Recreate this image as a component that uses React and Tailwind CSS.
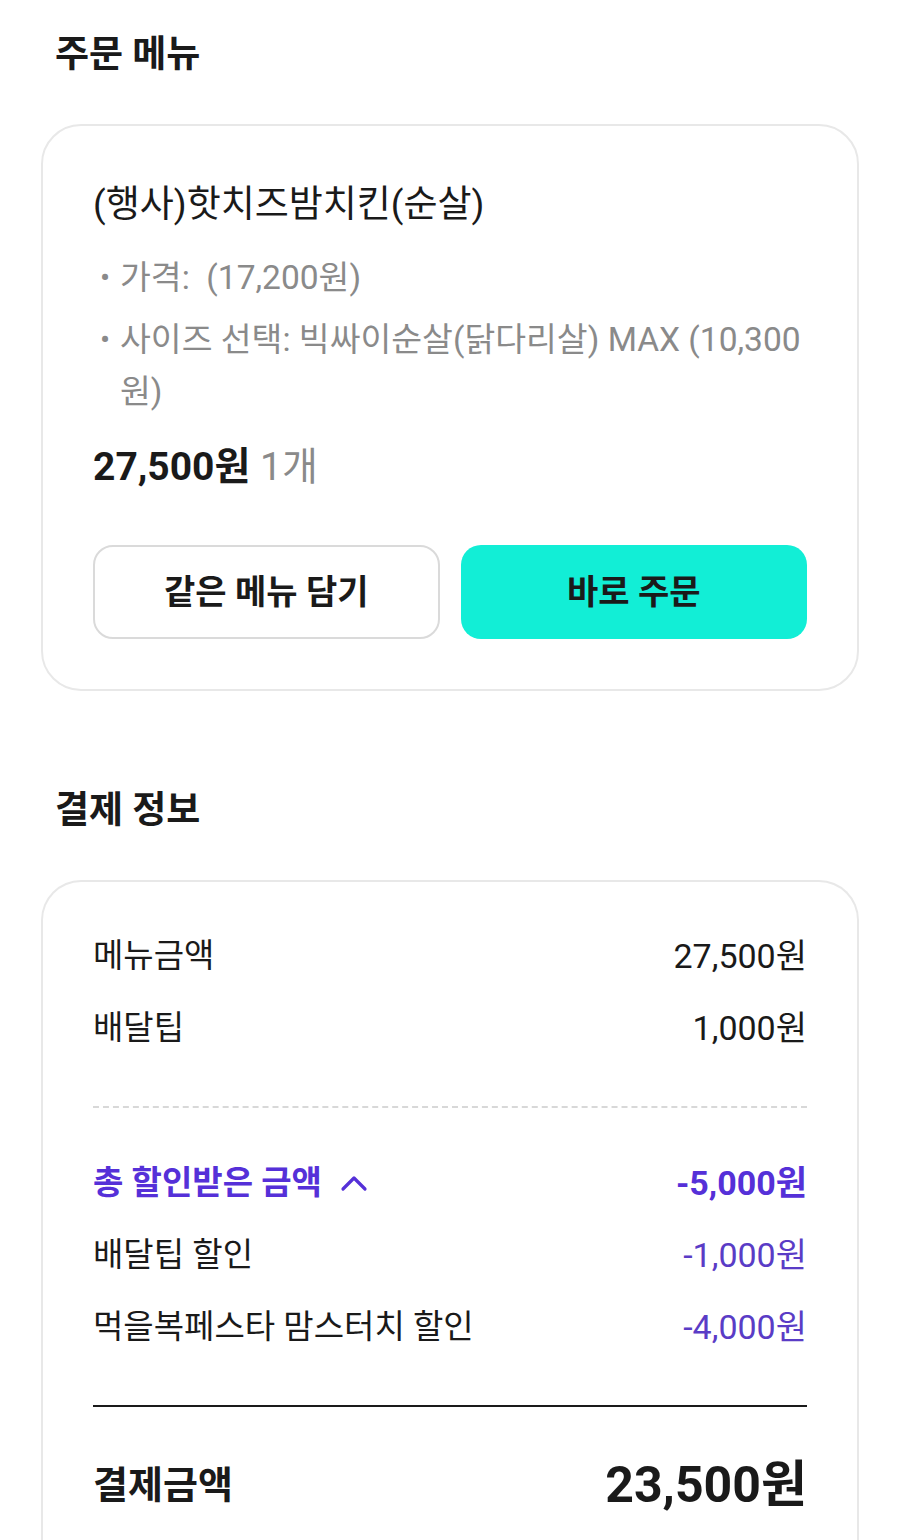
export default function App() {
  const font = { fontFamily: '"Roboto", "Noto Sans CJK KR", sans-serif' };
  return (
    <div className="w-[900px] min-h-[1540px] bg-white text-[#1a1a1a] pt-[33px] px-[41px] overflow-hidden" style={font}>
      <h2 className="pl-[14px] text-[37px] leading-[44px] font-bold">주문 메뉴</h2>
      <div className="mt-[47px] border-2 border-[#e8e8e8] rounded-[40px] px-[50px] pt-[55px] pb-[50px]">
        <div className="text-[37px] leading-[48px]">(행사)핫치즈밤치킨(순살)</div>
        <ul className="mt-[23px] text-[33.5px] leading-[52px] text-[#8a8a8a]">
          <li className="flex">
            <span className="w-[27px] shrink-0 pl-[7px] text-[30px]">•</span>
            <span>가격:&nbsp; (17,200원)</span>
          </li>
          <li className="flex mt-[10px]">
            <span className="w-[27px] shrink-0 pl-[7px] text-[30px]">•</span>
            <span className="whitespace-nowrap">사이즈 선택: 빅싸이순살(닭다리살) MAX (10,300<br />원)</span>
          </li>
        </ul>
        <div className="mt-[25px] text-[39px] leading-[48px]">
          <span className="font-bold">27,500원</span>{" "}
          <span className="text-[#8a8a8a]">1개</span>
        </div>
        <div className="mt-[54px] grid grid-cols-2 gap-[21px]">
          <button className="h-[94px] rounded-[20px] border-2 border-[#dadada] bg-white text-[34px] font-bold">같은 메뉴 담기</button>
          <button className="h-[94px] rounded-[20px] bg-[#12eed6] text-[34px] font-bold">바로 주문</button>
        </div>
      </div>

      <h2 className="mt-[98px] pl-[14px] text-[37px] leading-[44px] font-bold">결제 정보</h2>
      <div className="mt-[47px] border-2 border-b-0 border-[#e8e8e8] rounded-t-[40px] px-[50px] pt-[38px] pb-[40px]">
        <div className="h-[72px] flex items-center justify-between text-[33px]">
          <span>메뉴금액</span>
          <span className="text-[34px]">27,500원</span>
        </div>
        <div className="h-[72px] flex items-center justify-between text-[33px]">
          <span>배달팁</span>
          <span className="text-[34px]">1,000원</span>
        </div>
        <div className="mt-[42px] border-t-2 border-dashed border-[#d8d8d8]"></div>
        <div className="mt-[39px] h-[72px] flex items-center justify-between text-[33px] font-bold text-[#5530d8]">
          <span className="flex items-center gap-[18px]">
            총 할인받은 금액
            <svg width="28" height="18" viewBox="0 0 28 18" fill="none" stroke="#5530d8" strokeWidth="3.2" strokeLinecap="round" strokeLinejoin="round">
              <path d="M3 15 L14 4 L25 15" />
            </svg>
          </span>
          <span className="text-[34px]">-5,000원</span>
        </div>
        <div className="h-[72px] flex items-center justify-between text-[33px]">
          <span>배달팁 할인</span>
          <span className="text-[34px] text-[#5a3cc6]">-1,000원</span>
        </div>
        <div className="h-[72px] flex items-center justify-between text-[33px]">
          <span>먹을복페스타 맘스터치 할인</span>
          <span className="text-[34px] text-[#5a3cc6]">-4,000원</span>
        </div>
        <div className="mt-[42px] border-t-2 border-[#1a1a1a]"></div>
        <div className="mt-[42px] h-[72px] flex items-center justify-between font-bold">
          <span className="text-[38px]">결제금액</span>
          <span className="text-[50px]">23,500원</span>
        </div>
      </div>
    </div>
  );
}
